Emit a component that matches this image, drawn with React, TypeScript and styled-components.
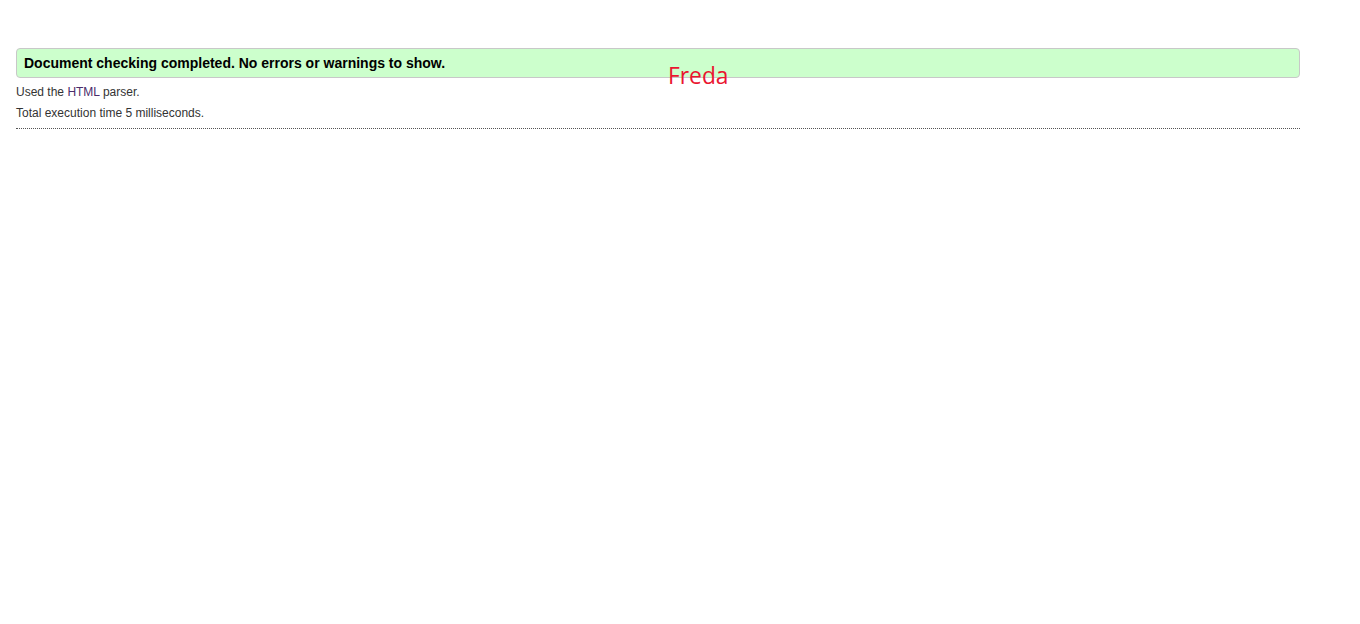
import React from "react";
import styled, { createGlobalStyle } from "styled-components";

const Global = createGlobalStyle`
  html, body { margin: 0; padding: 0; background: #ffffff; }
  body { font-family: "Liberation Sans", Arial, sans-serif; }
`;

const Page = styled.div`
  position: relative;
  padding: 48px 60px 0 16px;
  width: 1284px;
`;

const SuccessBox = styled.div`
  background: #ccffcc;
  border: 1px solid #c8c8c8;
  border-radius: 4px;
  padding: 4px 7px;
  font-size: 14px;
  line-height: 20px;
  font-weight: bold;
  color: #000;
`;

const Info = styled.p<{ $top: number }>`
  margin: ${(p) => p.$top}px 0 0 0;
  font-size: 12px;
  line-height: 16px;
  color: #333;
`;

const Accent = styled.span`
  color: #4a2d6b;
`;

const Rule = styled.hr`
  margin: 7px 0 0 0;
  border: 0;
  border-top: 1px dotted #555;
  height: 0;
`;

const Stamp = styled.div`
  position: absolute;
  left: 668px;
  top: 61px;
  font-family: "Open Sans", "Noto Sans", sans-serif;
  font-size: 22.8px;
  line-height: 30px;
  color: #ea1530;
`;

export default function App() {
  return (
    <>
      <Global />
      <Page>
        <SuccessBox>Document checking completed. No errors or warnings to show.</SuccessBox>
        <Info $top={6}>
          Used the <Accent>HTML</Accent> parser.
        </Info>
        <Info $top={5}>Total execution time 5 milliseconds.</Info>
        <Rule />
        <Stamp>Freda</Stamp>
      </Page>
    </>
  );
}
